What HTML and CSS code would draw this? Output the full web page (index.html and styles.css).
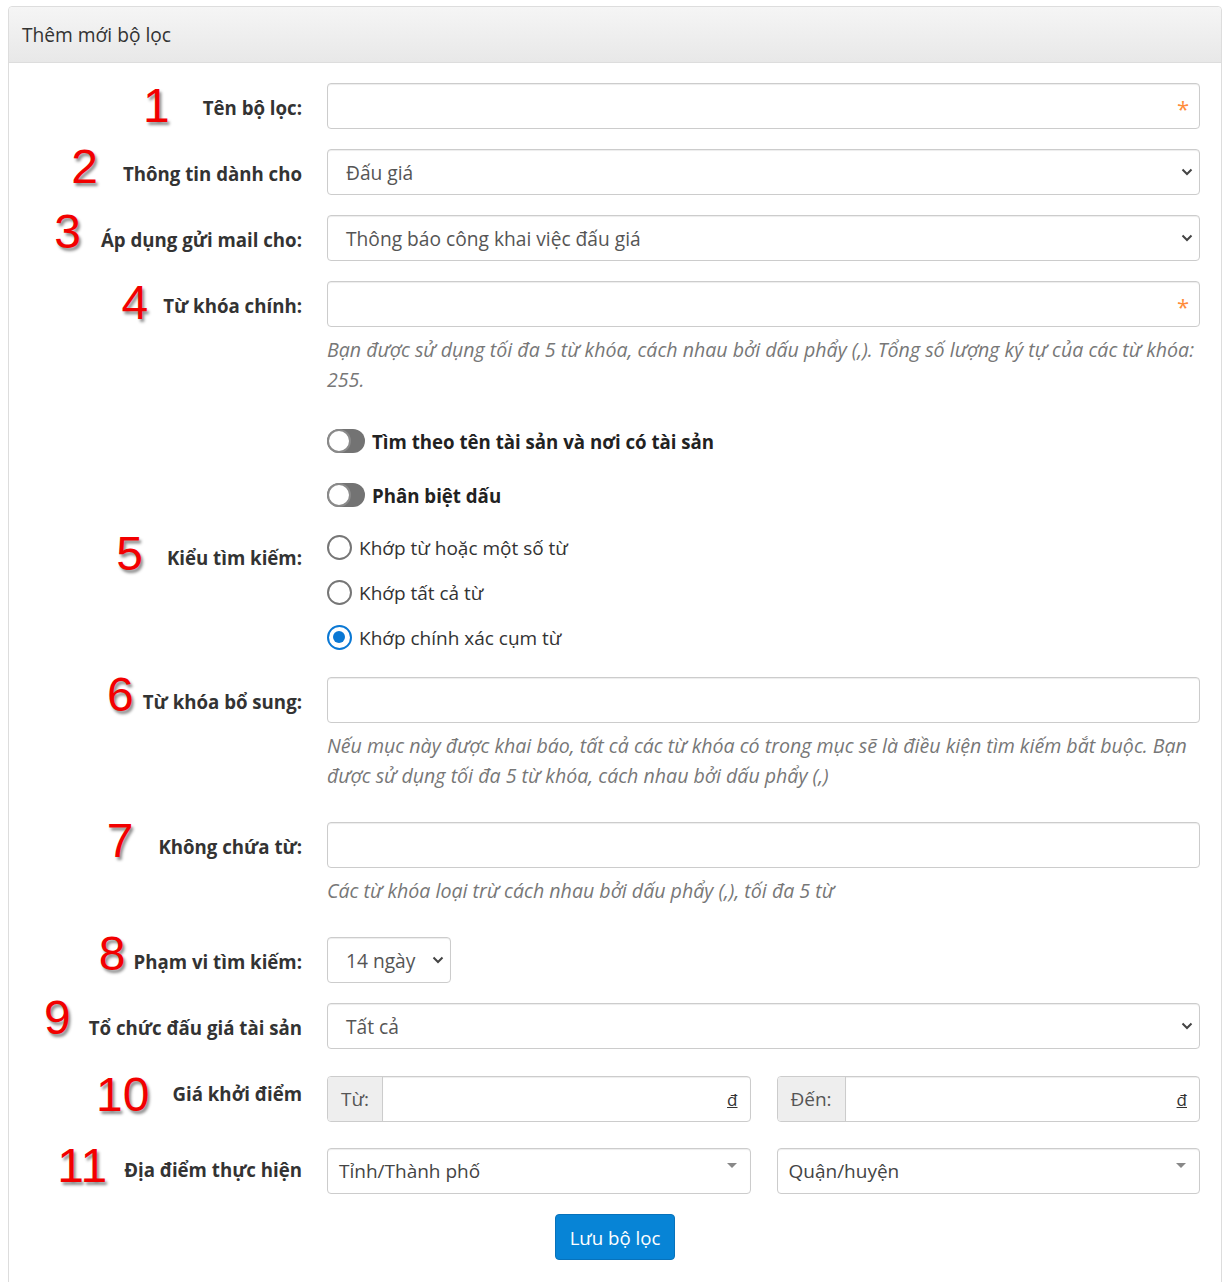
FILE: index.html
```html
<!DOCTYPE html>
<html lang="vi">
<head>
<meta charset="utf-8">
<title>Thêm mới bộ lọc</title>
<link rel="stylesheet" href="styles.css">
</head>
<body>
<div class="panel">
  <div class="panel-heading">Thêm mới bộ lọc</div>
  <div class="panel-body">

    <div class="row">
      <div class="lbl"><span class="num n1">1</span><span>Tên bộ lọc:</span></div>
      <div class="ctl"><div class="input"><span class="req">*</span></div></div>
    </div>

    <div class="row">
      <div class="lbl"><span class="num n2">2</span><span>Thông tin dành cho</span></div>
      <div class="ctl"><div class="input select"><span>Đấu giá</span><svg class="chev" width="12" height="8" viewBox="0 0 12 8"><path d="M1.5 1.5 L6 6 L10.5 1.5" fill="none" stroke="#444" stroke-width="2"/></svg></div></div>
    </div>

    <div class="row">
      <div class="lbl"><span class="num n3">3</span><span>Áp dụng gửi mail cho:</span></div>
      <div class="ctl"><div class="input select"><span>Thông báo công khai việc đấu giá</span><svg class="chev" width="12" height="8" viewBox="0 0 12 8"><path d="M1.5 1.5 L6 6 L10.5 1.5" fill="none" stroke="#444" stroke-width="2"/></svg></div></div>
    </div>

    <div class="row row-help">
      <div class="lbl"><span class="num n4">4</span><span>Từ khóa chính:</span></div>
      <div class="ctl">
        <div class="input"><span class="req">*</span></div>
        <p class="help">Bạn được sử dụng tối đa 5 từ khóa, cách nhau bởi dấu phẩy (,). Tổng số lượng ký tự của các từ khóa: 255.</p>
      </div>
    </div>

    <div class="row row-toggle">
      <div class="lbl"></div>
      <div class="ctl"><div class="toggle"><span class="switch"><span class="knob"></span></span><span class="tlabel">Tìm theo tên tài sản và nơi có tài sản</span></div></div>
    </div>

    <div class="row row-toggle2">
      <div class="lbl"></div>
      <div class="ctl"><div class="toggle"><span class="switch"><span class="knob"></span></span><span class="tlabel">Phân biệt dấu</span></div></div>
    </div>

    <div class="row row-radio">
      <div class="lbl lbl-radio"><span class="num n5">5</span><span>Kiểu tìm kiếm:</span></div>
      <div class="ctl">
        <div class="radio"><span class="rdot"></span><span>Khớp từ hoặc một số từ</span></div>
        <div class="radio"><span class="rdot"></span><span>Khớp tất cả từ</span></div>
        <div class="radio"><span class="rdot on"></span><span>Khớp chính xác cụm từ</span></div>
      </div>
    </div>

    <div class="row row-help">
      <div class="lbl"><span class="num n6">6</span><span>Từ khóa bổ sung:</span></div>
      <div class="ctl">
        <div class="input"></div>
        <p class="help">Nếu mục này được khai báo, tất cả các từ khóa có trong mục sẽ là điều kiện tìm kiếm bắt buộc. Bạn được sử dụng tối đa 5 từ khóa, cách nhau bởi dấu phẩy (,)</p>
      </div>
    </div>

    <div class="row row-help">
      <div class="lbl"><span class="num n7">7</span><span>Không chứa từ:</span></div>
      <div class="ctl">
        <div class="input"></div>
        <p class="help">Các từ khóa loại trừ cách nhau bởi dấu phẩy (,), tối đa 5 từ</p>
      </div>
    </div>

    <div class="row">
      <div class="lbl"><span class="num n8">8</span><span>Phạm vi tìm kiếm:</span></div>
      <div class="ctl"><div class="input select small"><span>14 ngày</span><svg class="chev" width="12" height="8" viewBox="0 0 12 8"><path d="M1.5 1.5 L6 6 L10.5 1.5" fill="none" stroke="#444" stroke-width="2"/></svg></div></div>
    </div>

    <div class="row row-gap27">
      <div class="lbl"><span class="num n9">9</span><span>Tổ chức đấu giá tài sản</span></div>
      <div class="ctl"><div class="input select"><span>Tất cả</span><svg class="chev" width="12" height="8" viewBox="0 0 12 8"><path d="M1.5 1.5 L6 6 L10.5 1.5" fill="none" stroke="#444" stroke-width="2"/></svg></div></div>
    </div>

    <div class="row row-gap26">
      <div class="lbl lbl-up"><span class="num n10">10</span><span>Giá khởi điểm</span></div>
      <div class="ctl pair">
        <div class="igroup"><span class="addon">Từ:</span><span class="ifield"><span class="dong">đ</span></span></div>
        <div class="igroup"><span class="addon">Đến:</span><span class="ifield"><span class="dong">đ</span></span></div>
      </div>
    </div>

    <div class="row">
      <div class="lbl lbl-up2"><span class="num n11">11</span><span>Địa điểm thực hiện</span></div>
      <div class="ctl pair">
        <div class="input s2"><span>Tỉnh/Thành phố</span><span class="tri"></span></div>
        <div class="input s2"><span>Quận/huyện</span><span class="tri"></span></div>
      </div>
    </div>

    <div class="actions"><button class="btn" type="button">Lưu bộ lọc</button></div>
  </div>
</div>
</body>
</html>
```

FILE: styles.css
```css
html, body { background: #fff; }
body {
  margin: 6px 8px 0 8px;
  font-family: "Segoe UI", "Open Sans", "Noto Sans", sans-serif;
  font-size: 18.67px;
  color: #333;
}

.panel {
  border: 1px solid #ddd;
  border-radius: 4px;
  background: #fff;
}

.panel-heading {
  height: 56px;
  box-sizing: border-box;
  padding: 0 13px;
  display: flex;
  align-items: center;
  background: linear-gradient(#f5f5f5, #e8e8e8);
  border-bottom: 1px solid #ddd;
  border-radius: 4px 4px 0 0;
  color: #333;
  font-size: 19.2px;
}

.panel-body {
  padding: 20px 20px 40px 0;
}

.row {
  display: grid;
  grid-template-columns: 293px 873px;
  column-gap: 25px;
  margin-bottom: 20px;
}

.row-help { margin-bottom: 31px; }
.row-toggle { margin-bottom: 24px; }
.row-toggle2 { margin-bottom: 15px; }
.row-radio { margin-bottom: 17px; }
.row-gap27 { margin-bottom: 27px; }
.row-gap26 { margin-bottom: 26px; }

.lbl {
  display: flex;
  justify-content: flex-end;
  align-items: center;
  height: 46px;
  font-weight: 700;
  white-space: nowrap;
}
.lbl:empty { height: auto; }
.lbl > span:last-child { position: relative; top: 1px; }
.lbl-radio { height: 62px; }
.lbl-up > span:last-child { top: -6px; }
.lbl-up2 { height: 40px; }

.num {
  font-family: "Liberation Sans", Arial, sans-serif;
  font-size: 48px;
  font-weight: 400;
  line-height: 1;
  color: #f20000;
  text-shadow: 2px 3px 3px rgba(0, 0, 0, 0.45);
  position: relative;
}
.n1 { margin-right: 33px; top: 0; }
.n2 { margin-right: 25px; top: -5px; }
.n3 { margin-right: 20px; top: -6px; }
.n4 { margin-right: 15px; top: -1px; }
.n5 { margin-right: 24px; top: -2px; }
.n6 { margin-right: 9px; top: -5px; }
.n7 { margin-right: 25px; top: -4px; }
.n8 { margin-right: 8px; top: -6px; }
.n9 { margin-right: 18px; top: -8px; }
.n10 { margin-right: 23px; top: -4px; }
.n11 { margin-right: 17px; top: -2px; }

.input {
  position: relative;
  height: 46px;
  box-sizing: border-box;
  border: 1px solid #ccc;
  border-radius: 4px;
  box-shadow: inset 0 1px 1px rgba(0, 0, 0, 0.075);
  display: flex;
  align-items: center;
  padding: 0 18px;
  background: #fff;
  color: #555;
  font-size: 19.2px;
}

.req {
  position: absolute;
  right: 10px;
  top: 13px;
  color: #ff8c3a;
  font-size: 22px;
  line-height: 1;
}

.select { justify-content: space-between; padding-right: 6px; }
.select.small { width: 124px; }
.chev { flex: none; }

.help {
  margin: 8px 0 0 0;
  font-style: italic;
  font-size: 19.6px;
  line-height: 30px;
  color: #777;
}

.toggle {
  display: flex;
  align-items: center;
  height: 30px;
}
.switch {
  position: relative;
  width: 38px;
  height: 24px;
  border-radius: 12px;
  background: #737373;
  flex: none;
}
.knob {
  position: absolute;
  left: 0;
  top: 0;
  width: 24px;
  height: 24px;
  box-sizing: border-box;
  border-radius: 50%;
  background: #fff;
  border: 2px solid #8a8a8a;
}
.tlabel {
  margin-left: 7px;
  font-weight: 700;
  color: #222;
}

.radio {
  display: flex;
  align-items: center;
  height: 45px;
  color: #333;
  font-size: 19px;
}
.rdot {
  width: 25px;
  height: 25px;
  box-sizing: border-box;
  border-radius: 50%;
  border: 2px solid #767676;
  margin-right: 7px;
  position: relative;
  flex: none;
}
.rdot.on { border-color: #0a78d4; border-width: 2.5px; }
.rdot.on::after {
  content: "";
  position: absolute;
  left: 4px;
  top: 4px;
  width: 12px;
  height: 12px;
  border-radius: 50%;
  background: #0a78d4;
}

.pair {
  display: grid;
  grid-template-columns: 1fr 1fr;
  column-gap: 26px;
}

.igroup {
  display: flex;
  height: 46px;
  box-sizing: border-box;
  border: 1px solid #ccc;
  border-radius: 4px;
  overflow: hidden;
  font-size: 19px;
}
.addon {
  display: flex;
  align-items: center;
  padding: 0 13px;
  background: #eee;
  border-right: 1px solid #ccc;
  color: #555;
}
.ifield {
  flex: 1;
  display: flex;
  align-items: center;
  justify-content: flex-end;
  padding-right: 12px;
  box-shadow: inset 0 1px 1px rgba(0, 0, 0, 0.075);
}
.dong {
  text-decoration: underline;
  color: #333;
  font-size: 17px;
}

.s2 {
  padding: 0 10px 0 11px;
  color: #444;
  justify-content: space-between;
  font-size: 19px;
}
.tri {
  align-self: flex-start;
  margin-top: 14px;
  width: 0;
  height: 0;
  border-left: 5px solid transparent;
  border-right: 5px solid transparent;
  border-top: 5px solid #888;
  margin-right: 3px;
}

.actions {
  display: flex;
  justify-content: center;
  padding-left: 20px;
}
.btn {
  height: 46px;
  padding: 0 14px;
  font-family: inherit;
  font-size: 18.67px;
  color: #fff;
  background: #0784d6;
  border: 1px solid #0772bb;
  border-radius: 4px;
}
```
